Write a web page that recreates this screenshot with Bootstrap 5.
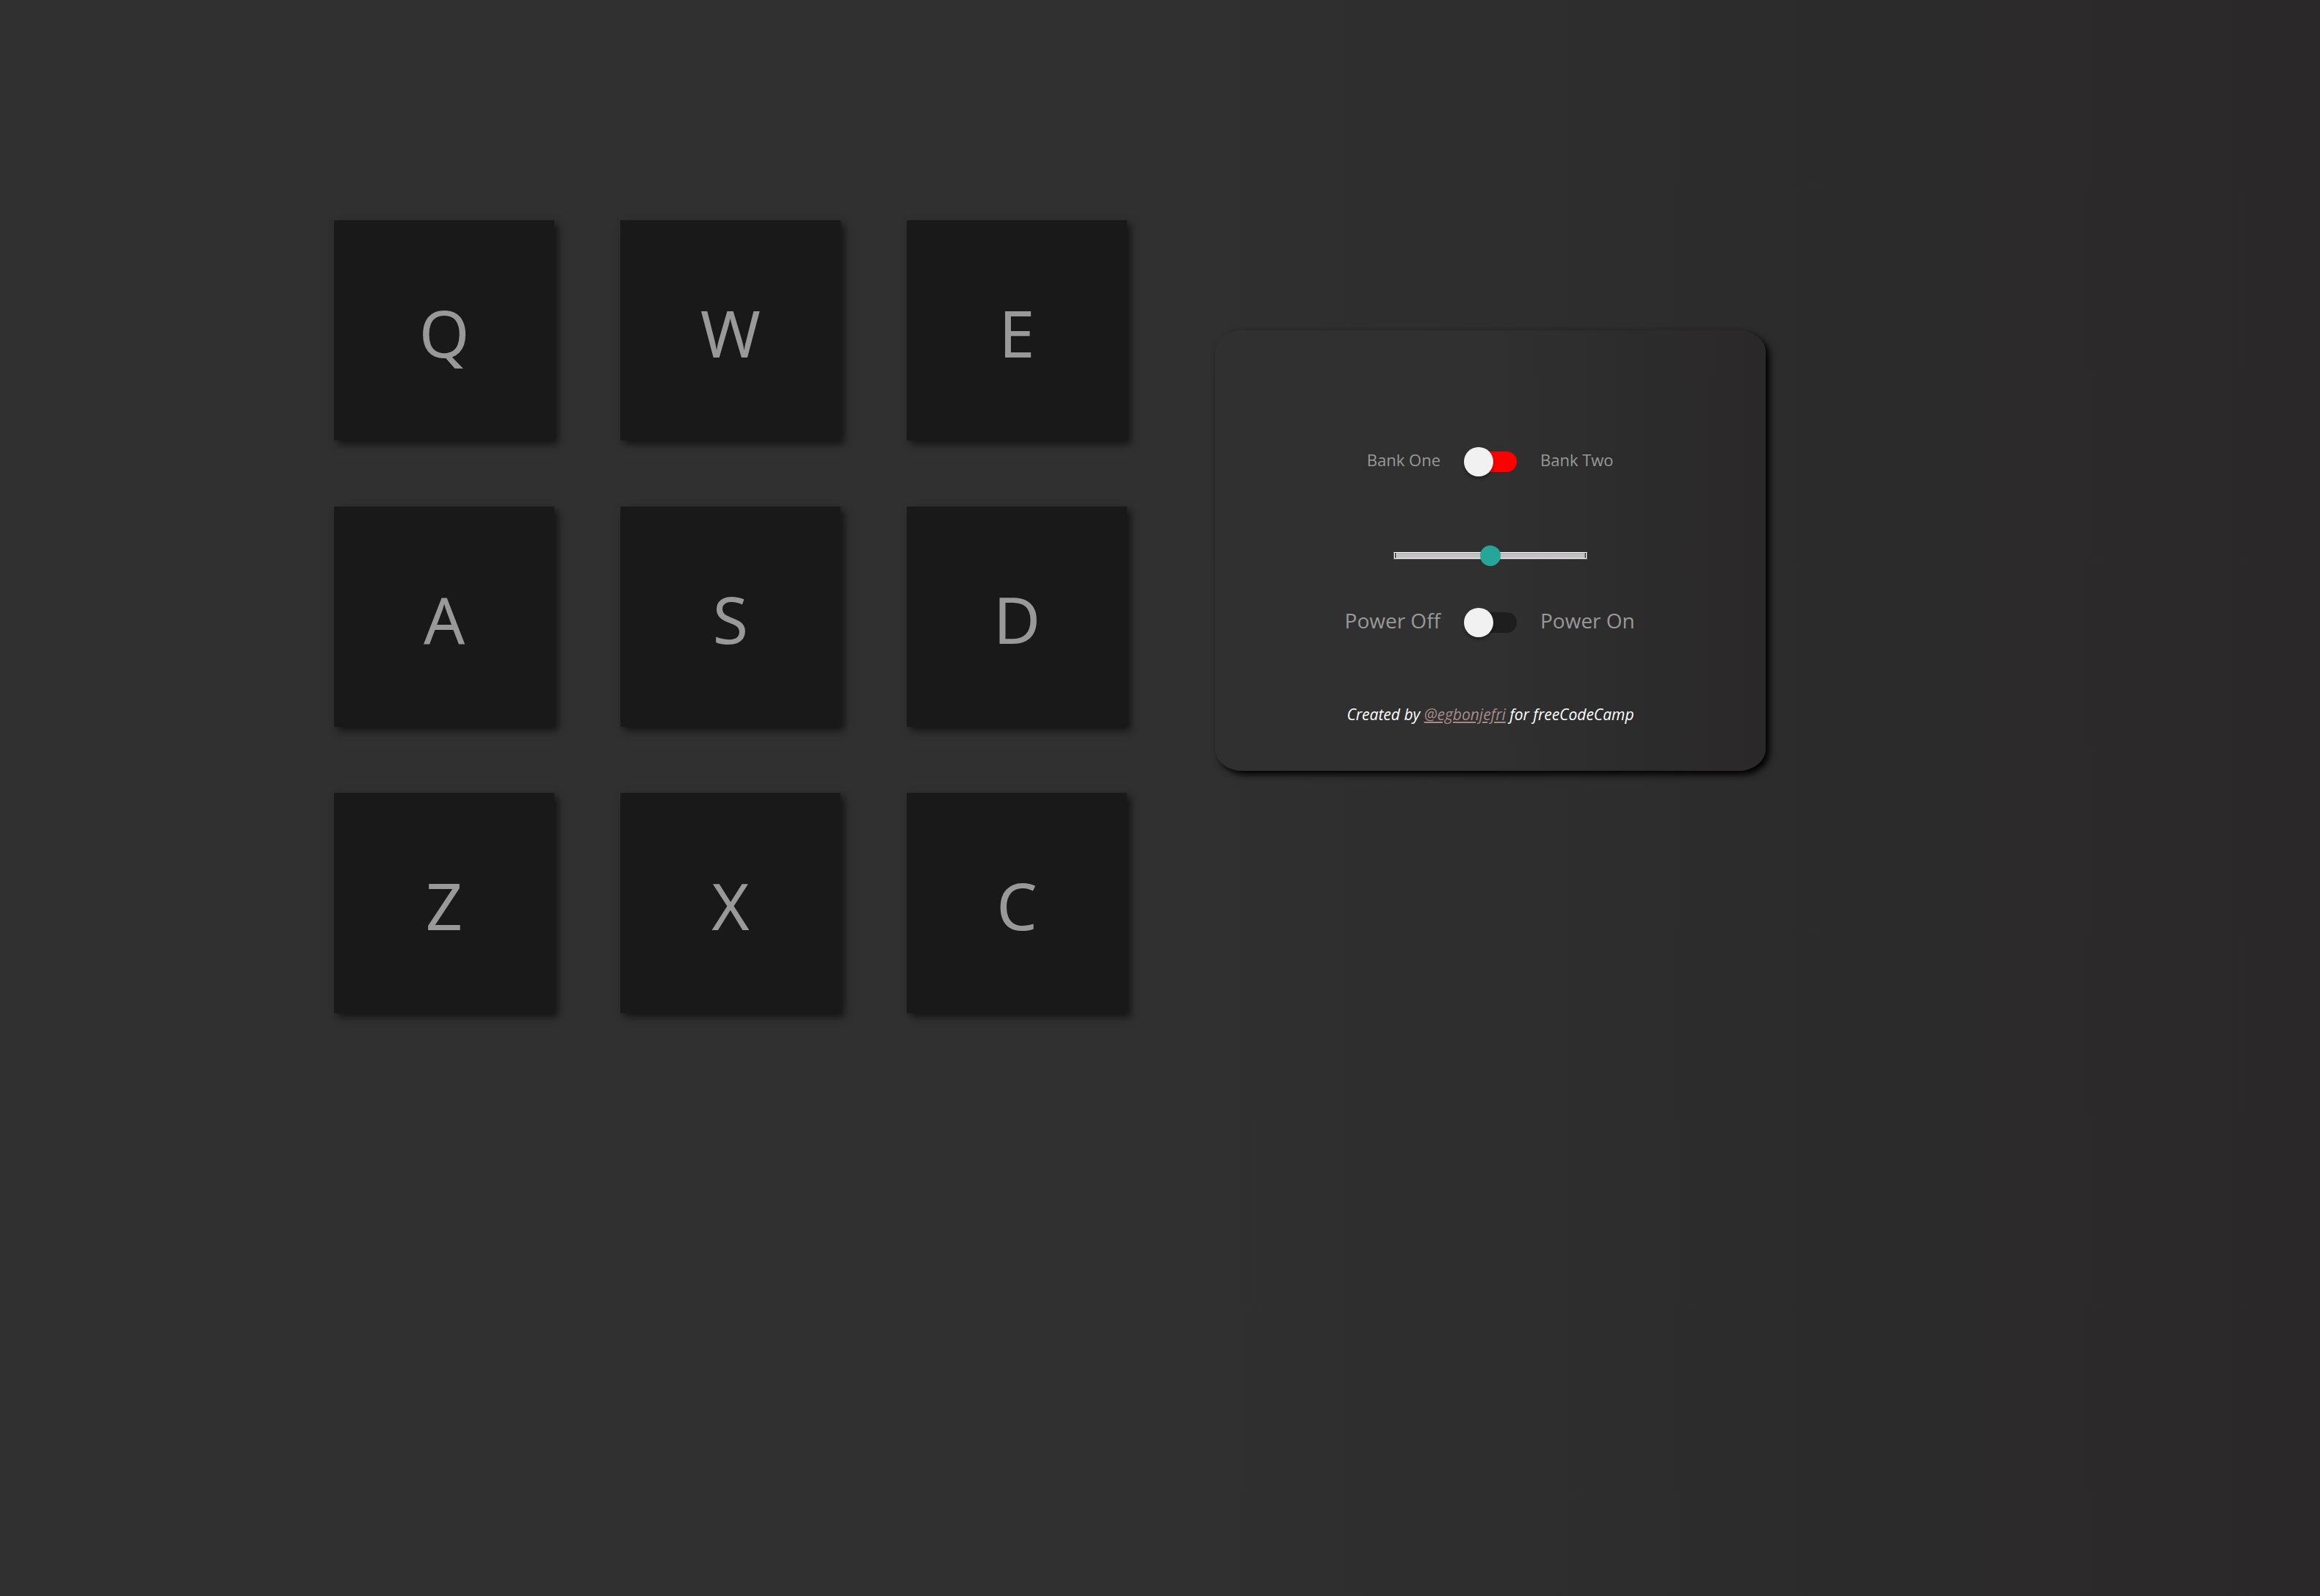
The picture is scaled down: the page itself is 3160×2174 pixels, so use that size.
<!DOCTYPE html>
<html lang="en">
<head>
<meta charset="utf-8">
<meta name="viewport" content="width=device-width, initial-scale=1">
<title>Drum Machine</title>
<link href="https://cdn.jsdelivr.net/npm/bootstrap@5.3.0/dist/css/bootstrap.min.css" rel="stylesheet">
<style>
body { font-family: "Open Sans", "Noto Sans", sans-serif; color: #999; }
body, .control-panel { background-image: linear-gradient(90deg, #303030 50%, #2a2829 100%); }
.drum-machine { padding: 300px 455px; gap: 120px; }
.pad-grid { display: grid; grid-template-columns: repeat(3, 300px); gap: 90px; }
.drum-pad { height: 300px; background: #191919; border: 0; color: #999; font-family: "Noto Sans", sans-serif; font-size: 88px; line-height: 120px; padding: 6px 0 0; box-shadow: 5px 5px 10px rgba(0,0,0,.6); }
.control-panel { width: 750px; min-height: 600px; margin-top: 150px; border-radius: 5%; box-shadow: 5px 5px 10px #000; padding-top: 156px; }
.switch-row { display: grid; grid-template-columns: 1fr 72px 1fr; column-gap: 32px; align-items: center; width: 100%; height: 46px; }
.switch-row label { padding-bottom: 6px; }
.bank-row { font-size: 22px; }
.power-row { font-size: 28px; margin-top: 62px; }
.lever { appearance: none; position: relative; width: 72px; height: 28px; margin: 0; border-radius: 14px; background: #1e1e1e; cursor: pointer; }
.lever::before { content: ""; position: absolute; left: 0; top: -6px; width: 40px; height: 40px; border-radius: 50%; background: #f1f1f1; box-shadow: 0 3px 4px rgba(0,0,0,.35); }
.lever:checked::before { left: 32px; }
.lever-red { background: #f00; }
.volume { appearance: none; width: 264px; height: 10px; margin-top: 100px; border: 1px solid #767676; border-top-color: #fff; outline: 0; background: #c2c0c2; box-shadow: inset 1px 0 0 #fff, inset -1px 0 0 #fff, inset 0 -1px 0 #fff, inset 2px 0 0 #222, inset -2px 0 0 #222, inset 3px 0 0 #999, inset -3px 0 0 #999, inset 0 1px 0 #aaa; }
.volume::-webkit-slider-thumb { appearance: none; width: 28px; height: 28px; border-radius: 50%; background: #26a69a; }
.credit { margin-top: 88px; font-size: 21px; line-height: 30px; font-style: italic; color: #fff; }
.credit a { color: #a58a8a; }
</style>
</head>
<body class="min-vh-100">
<main class="drum-machine d-flex align-items-start">
  <section class="pad-grid" aria-label="Drum pads">
    <button class="drum-pad">Q</button><button class="drum-pad">W</button><button class="drum-pad">E</button>
    <button class="drum-pad">A</button><button class="drum-pad">S</button><button class="drum-pad">D</button>
    <button class="drum-pad">Z</button><button class="drum-pad">X</button><button class="drum-pad">C</button>
  </section>
  <section class="control-panel d-flex flex-column align-items-center flex-shrink-0" aria-label="Controls">
    <div class="switch-row bank-row">
      <label class="text-end" for="bank">Bank One</label>
      <input class="lever lever-red" type="checkbox" role="switch" id="bank">
      <label for="bank">Bank Two</label>
    </div>
    <input class="volume" type="range" min="0" max="100" value="50" aria-label="Volume">
    <div class="switch-row power-row">
      <label class="text-end" for="power">Power Off</label>
      <input class="lever" type="checkbox" role="switch" id="power">
      <label for="power">Power On</label>
    </div>
    <p class="credit mb-0">Created by <a href="#">@egbonjefri</a> for freeCodeCamp</p>
  </section>
</main>
<script src="https://cdn.jsdelivr.net/npm/bootstrap@5.3.0/dist/js/bootstrap.bundle.min.js"></script>
</body>
</html>
